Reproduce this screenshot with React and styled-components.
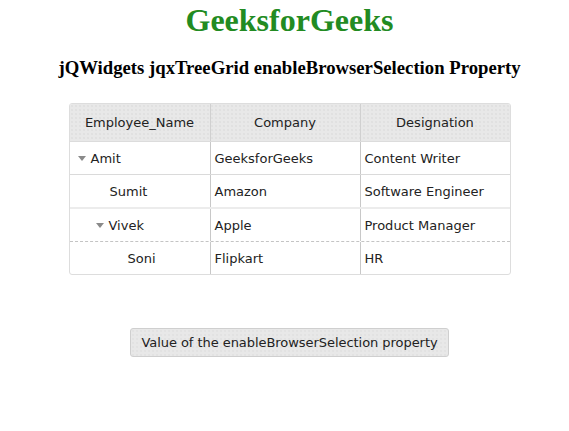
import React from 'react';
import styled, { createGlobalStyle } from 'styled-components';

const GlobalStyle = createGlobalStyle`
  body {
    margin: 0;
    background: #ffffff;
    font-family: "Liberation Serif", "Times New Roman", serif;
  }
`;

const Page = styled.div`
  display: flex;
  flex-direction: column;
  align-items: center;
  padding-left: 10px;
`;

const Title = styled.h1`
  margin: 2px 0 0;
  font-size: 32px;
  font-weight: bold;
  color: #228b22;
  line-height: 37px;
`;

const Subtitle = styled.h3`
  margin: 18px 0 0;
  font-size: 18.72px;
  font-weight: bold;
  color: #000;
  line-height: 22px;
`;

const Grid = styled.div`
  margin-top: 24px;
  width: 440px;
  border: 1px solid #dddddd;
  border-radius: 3px;
  overflow: hidden;
  font-family: "DejaVu Sans", Verdana, sans-serif;
  font-size: 13px;
  color: #222;
`;

const HeaderRow = styled.div`
  display: grid;
  grid-template-columns: 140px 150px 1fr;
  height: 37px;
  background-color: #e8e8e8;
  background-image: radial-gradient(#d6d6d6 0.6px, transparent 0.8px);
  background-size: 4px 4px;
  border-bottom: 1px solid #dcdcdc;
`;

const HeaderCell = styled.div`
  display: flex;
  align-items: center;
  justify-content: center;
  border-left: ${p => (p.first ? 'none' : '1px solid #d0d0d0')};
  color: #222;
`;

const Row = styled.div`
  display: grid;
  grid-template-columns: 140px 150px 1fr;
  height: 32px;
  border-bottom: ${p => p.divider || 'none'};
`;

const Cell = styled.div`
  display: flex;
  align-items: center;
  padding-left: ${p => p.indent || 4}px;
  border-left: ${p => (p.first ? 'none' : '1px solid #c8c8c8')};
  white-space: nowrap;
`;

const Arrow = styled.span`
  width: 0;
  height: 0;
  border-left: 4px solid transparent;
  border-right: 4px solid transparent;
  border-top: 5px solid #8a8a8a;
  margin-right: 5px;
  margin-top: 1px;
`;

const Button = styled.button`
  margin-top: 53px;
  height: 29px;
  padding: 0 10px;
  font-family: "DejaVu Sans", Verdana, sans-serif;
  font-size: 13px;
  letter-spacing: -0.05px;
  color: #222;
  background-color: #e8e8e8;
  background-image: radial-gradient(#dadada 0.6px, transparent 0.8px);
  background-size: 4px 4px;
  border: 1px solid #cfcfcf;
  border-radius: 3px;
`;

const rows = [
  { name: 'Amit', company: 'GeeksforGeeks', role: 'Content Writer', indent: 8, arrow: true, divider: '1px solid #dadada' },
  { name: 'Sumit', company: 'Amazon', role: 'Software Engineer', indent: 40, divider: '2px solid #ececec' },
  { name: 'Vivek', company: 'Apple', role: 'Product Manager', indent: 26, arrow: true, divider: '1px dashed #c4c4c4' },
  { name: 'Soni', company: 'Flipkart', role: 'HR', indent: 58 },
];

export default function App() {
  return (
    <>
      <GlobalStyle />
      <Page>
        <Title>GeeksforGeeks</Title>
        <Subtitle>jQWidgets jqxTreeGrid enableBrowserSelection Property</Subtitle>
        <Grid>
          <HeaderRow>
            <HeaderCell first>Employee_Name</HeaderCell>
            <HeaderCell>Company</HeaderCell>
            <HeaderCell>Designation</HeaderCell>
          </HeaderRow>
          {rows.map(r => (
            <Row key={r.name} divider={r.divider}>
              <Cell first indent={r.indent}>
                {r.arrow && <Arrow />}
                {r.name}
              </Cell>
              <Cell>{r.company}</Cell>
              <Cell>{r.role}</Cell>
            </Row>
          ))}
        </Grid>
        <Button>Value of the enableBrowserSelection property</Button>
      </Page>
    </>
  );
}
